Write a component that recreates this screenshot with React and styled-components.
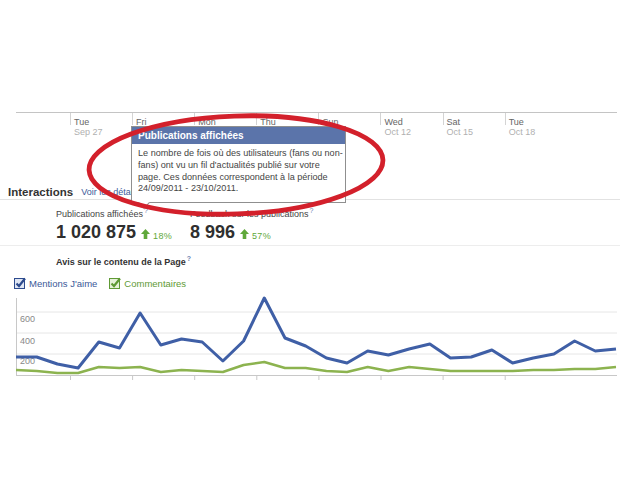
import React from 'react';
import styled, { createGlobalStyle } from 'styled-components';

const GlobalStyle = createGlobalStyle`
	html, body {
		margin: 0;
		padding: 0;
		background: #FFFFFF;
	}
	body {
		font-family: 'Liberation Sans', Arial, sans-serif;
	}
`;

const ticks = [
	{ day: 'Tue', date: 'Sep 27' },
	{ day: 'Fri', date: 'Sep 30' },
	{ day: 'Mon', date: 'Oct 3' },
	{ day: 'Thu', date: 'Oct 6' },
	{ day: 'Sun', date: 'Oct 9' },
	{ day: 'Wed', date: 'Oct 12' },
	{ day: 'Sat', date: 'Oct 15' },
	{ day: 'Tue', date: 'Oct 18' },
];

const likes = [357, 357, 364, 368, 342, 348, 313, 345, 339, 342, 361, 341, 298, 338, 346, 358, 363, 351, 355, 349, 344, 358, 357, 350, 363, 358, 354, 341, 351, 349];
const comments = [370, 371, 373, 373, 367, 368, 367, 372, 370, 371, 372, 365, 362, 368, 368, 371, 372, 367, 371, 367, 369, 371, 371, 371, 371, 370, 370, 369, 369, 367];

function toPoints (values) {
	return values.map((y, i) => `${(16 + i * 20.69).toFixed(1)},${y}`).join(' ');
}

function UpArrow () {
	return (
		<svg width="9" height="10" viewBox="0 0 9 10">
			<polygon points="4.5,0 9,5 6.3,5 6.3,10 2.7,10 2.7,5 0,5" fill="#5fa83a" />
		</svg>
	);
}

function CheckBox ({ color, fill }) {
	return (
		<svg width="12" height="12" viewBox="0 0 12 12">
			<rect x="0.5" y="1.5" width="10" height="10" fill={fill} stroke={color} />
			<path d="M2.5 6.5 L5 9 L11 1.5" fill="none" stroke={color} strokeWidth="2.2" />
		</svg>
	);
}

export default function App () {
	return (
		<Page>
			<GlobalStyle />
			<TimeAxis>
				{ticks.map((t, i) => (
					<Tick key={i}>
						<TickDay>{t.day}</TickDay>
						<TickDate>{t.date}</TickDate>
					</Tick>
				))}
			</TimeAxis>

			<SectionHeader>
				<Title>Interactions</Title>
				<DetailLink href="#">Voir les détails</DetailLink>
			</SectionHeader>

			<StatsRow>
				<Stat>
					<StatLabel>Publications affichées<Help>?</Help></StatLabel>
					<StatValue>
						<BigNumber>1 020 875</BigNumber>
						<UpArrow />
						<Percent>18%</Percent>
					</StatValue>
				</Stat>
				<Stat>
					<StatLabel>Feedback sur les publications<Help>?</Help></StatLabel>
					<StatValue>
						<BigNumber>8 996</BigNumber>
						<UpArrow />
						<Percent>57%</Percent>
					</StatValue>
				</Stat>
			</StatsRow>

			<SubTitle>Avis sur le contenu de la Page<Help>?</Help></SubTitle>

			<Legend>
				<LegendItem $color="#3b5998">
					<CheckBox color="#2d4b8e" fill="#dfe6f4" />
					Mentions J'aime
				</LegendItem>
				<LegendItem $color="#5f9a35">
					<CheckBox color="#5f9a35" fill="#e6f1d9" />
					Commentaires
				</LegendItem>
			</Legend>

			<Chart width="620" height="90" viewBox="0 292 620 90">
				{[312, 333, 354].map(y => (
					<line key={y} x1="16" x2="617" y1={y} y2={y} stroke="#e6e6e6" strokeWidth="1" />
				))}
				<line x1="16.5" x2="16.5" y1="298" y2="376" stroke="#c8c8c8" />
				<line x1="16" x2="617" y1="375.5" y2="375.5" stroke="#c8c8c8" />
				{ticks.map((t, i) => (
					<line key={i} x1={70.5 + i * 62.1} x2={70.5 + i * 62.1} y1="376" y2="380" stroke="#c8c8c8" />
				))}
				<AxisText x="20" y="322">600</AxisText>
				<AxisText x="20" y="344">400</AxisText>
				<AxisText x="20" y="364">200</AxisText>
				<polyline points={toPoints(comments)} fill="none" stroke="#8cb34f" strokeWidth="2.6" strokeLinejoin="round" />
				<polyline points={toPoints(likes)} fill="none" stroke="#3f5fa6" strokeWidth="3" strokeLinejoin="round" />
			</Chart>

			<Tooltip>
				<TooltipHeader>Publications affichées</TooltipHeader>
				<TooltipBody>
					Le nombre de fois où des utilisateurs (fans ou non-<br />
					fans) ont vu un fil d'actualités publié sur votre<br />
					page. Ces données correspondent à la période<br />
					24/09/2011 - 23/10/2011.
				</TooltipBody>
			</Tooltip>

			<Circle width="330" height="120" viewBox="0 0 330 120">
				<ellipse cx="156" cy="58" rx="147" ry="49" fill="none" stroke="#d3202b" strokeWidth="4.8" transform="rotate(-2 156 58)" />
			</Circle>
		</Page>
	);
}

const Page = styled.div`
	position: relative;
	width: 620px;
	height: 490px;
	padding-top: 112px;
	box-sizing: border-box;
	overflow: hidden;
	color: #333;
`;

const TimeAxis = styled.div`
	margin-left: 16px;
	width: 601px;
	height: 26px;
	padding-left: 54px;
	box-sizing: border-box;
	border-top: 1px solid #c4c4c4;
	display: flex;
`;

const Tick = styled.div`
	width: 62.1px;
	flex: none;
	box-sizing: border-box;
	padding: 4px 0 0 3px;
	border-left: 1px solid #d4d4d4;
	height: 12px;
	display: flex;
	flex-direction: column;
	font-size: 9px;
	line-height: 10px;
`;

const TickDay = styled.span`
	color: #666;
	white-space: nowrap;
`;

const TickDate = styled.span`
	color: #b0b0b0;
	white-space: nowrap;
`;

const SectionHeader = styled.div`
	margin-top: 45px;
	height: 17px;
	padding: 1px 0 0 8px;
	box-sizing: border-box;
	display: flex;
	align-items: center;
	gap: 8px;
	border-bottom: 1px solid #e2e2e2;
`;

const Title = styled.span`
	font-size: 11.5px;
	font-weight: bold;
	color: #333;
`;

const DetailLink = styled.a`
	font-size: 9px;
	color: #3b5998;
	text-decoration: none;
`;

const StatsRow = styled.div`
	height: 46px;
	padding: 5px 0 0 56px;
	box-sizing: border-box;
	display: flex;
	border-bottom: 1px solid #ededed;
`;

const Stat = styled.div`
	width: 134px;
	display: flex;
	flex-direction: column;
`;

const StatLabel = styled.span`
	font-size: 9px;
	line-height: 11px;
	color: #444;
	white-space: nowrap;
`;

const Help = styled.sup`
	font-size: 7px;
	color: #6d84b4;
	margin-left: 1px;
`;

const StatValue = styled.div`
	display: flex;
	align-items: flex-end;
	gap: 2px;
	margin-top: 1px;

	svg {
		margin: 0 1px 4px 3px;
	}
`;

const BigNumber = styled.span`
	font-size: 18px;
	font-weight: bold;
	line-height: 22px;
	color: #2f2f2f;
`;

const Percent = styled.span`
	font-size: 9px;
	color: #5fa83a;
	line-height: 13px;
	letter-spacing: 0.3px;
`;

const SubTitle = styled.div`
	margin-top: 7px;
	padding-left: 56px;
	font-size: 9px;
	line-height: 12px;
	font-weight: bold;
	color: #333;
`;

const Legend = styled.div`
	margin-top: 8px;
	padding-left: 14px;
	display: flex;
	gap: 12px;
	height: 14px;
	align-items: center;
`;

const LegendItem = styled.span`
	display: flex;
	align-items: center;
	gap: 3px;
	font-size: 9.5px;
	color: ${props => props.$color};
`;

const Chart = styled.svg`
	display: block;
	margin-top: 2px;
`;

const AxisText = styled.text`
	font-size: 9px;
	fill: #888;
	font-family: 'Liberation Sans', Arial, sans-serif;
`;

const Tooltip = styled.div`
	position: absolute;
	left: 131px;
	top: 126px;
	width: 215px;
	box-sizing: border-box;
	background: #FFFFFF;
	border: 1px solid #8f8f8f;

	&::after {
		content: '';
		position: absolute;
		left: 8px;
		bottom: -5px;
		width: 7px;
		height: 7px;
		background: #FFFFFF;
		border-right: 1px solid #8f8f8f;
		border-bottom: 1px solid #8f8f8f;
		transform: rotate(45deg);
	}
`;

const TooltipHeader = styled.div`
	height: 17px;
	padding-left: 6px;
	background: #5b74aa;
	color: #FFFFFF;
	font-size: 10px;
	font-weight: bold;
	line-height: 17px;
`;

const TooltipBody = styled.div`
	padding: 4px 6px 7px 6px;
	font-size: 9.1px;
	line-height: 11.8px;
	color: #444;
	white-space: nowrap;
`;

const Circle = styled.svg`
	position: absolute;
	left: 80px;
	top: 107px;
	pointer-events: none;
`;
